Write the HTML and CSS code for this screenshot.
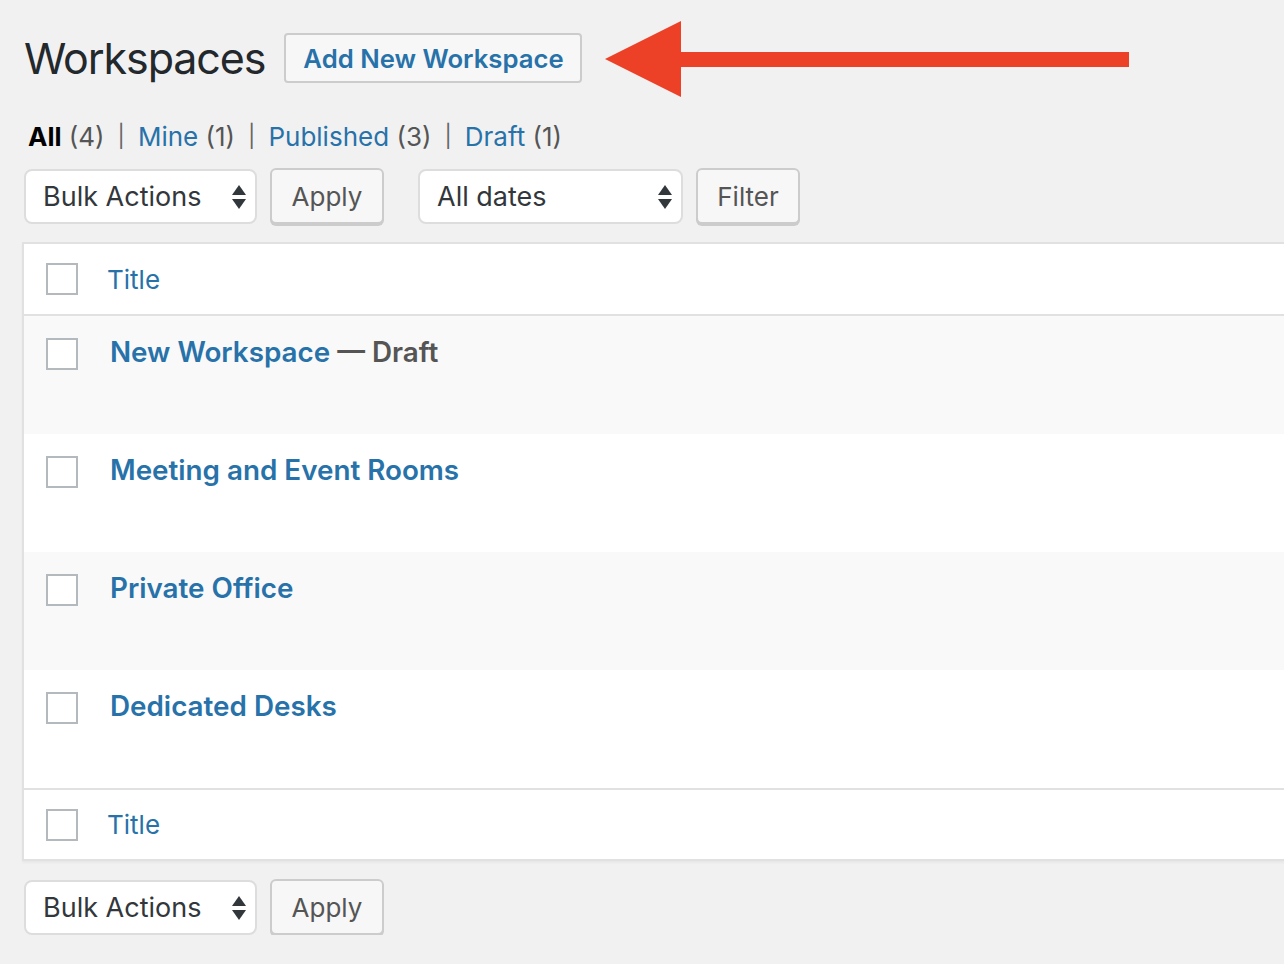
FILE: index.html
```html
<!DOCTYPE html>
<html>
<head>
<meta charset="utf-8">
<link rel="stylesheet" href="styles.css">
</head>
<body>
<div class="wrap">
  <div class="header">
    <h1 class="title">Workspaces</h1>
    <a class="add-btn">Add New Workspace</a>
  </div>
  <svg class="arrow" width="530" height="80" viewBox="0 0 530 80">
    <polygon points="0,38 76,0 76,31 524,31 524,46 76,46 76,76" fill="#ec4027"/>
  </svg>
  <ul class="views">
    <li><span class="current">All</span> <span class="count">(4)</span></li>
    <li class="sep">|</li>
    <li><a>Mine</a> <span class="count">(1)</span></li>
    <li class="sep">|</li>
    <li><a>Published</a> <span class="count">(3)</span></li>
    <li class="sep">|</li>
    <li><a>Draft</a> <span class="count">(1)</span></li>
  </ul>
  <div class="tablenav top">
    <div class="select bulk">Bulk Actions<svg class="updown" width="14" height="24" viewBox="0 0 14 24"><polygon points="7,0 14,10 0,10" fill="#32373c"/><polygon points="0,14 14,14 7,24" fill="#32373c"/></svg></div>
    <div class="button apply">Apply</div>
    <div class="select dates">All dates<svg class="updown" width="14" height="24" viewBox="0 0 14 24"><polygon points="7,0 14,10 0,10" fill="#32373c"/><polygon points="0,14 14,14 7,24" fill="#32373c"/></svg></div>
    <div class="button filter">Filter</div>
  </div>
  <div class="table">
    <div class="row head"><span class="cb"></span><a class="col-title">Title</a></div>
    <div class="row item alt"><span class="cb"></span><div class="item-title"><a>New Workspace</a> <span class="state">— Draft</span></div></div>
    <div class="row item"><span class="cb"></span><div class="item-title"><a>Meeting and Event Rooms</a></div></div>
    <div class="row item alt"><span class="cb"></span><div class="item-title"><a>Private Office</a></div></div>
    <div class="row item"><span class="cb"></span><div class="item-title"><a>Dedicated Desks</a></div></div>
    <div class="row foot"><span class="cb"></span><a class="col-title">Title</a></div>
  </div>
  <div class="tablenav bottom">
    <div class="select bulk">Bulk Actions<svg class="updown" width="14" height="24" viewBox="0 0 14 24"><polygon points="7,0 14,10 0,10" fill="#32373c"/><polygon points="0,14 14,14 7,24" fill="#32373c"/></svg></div>
    <div class="button apply">Apply</div>
  </div>
</div>
</body>
</html>
```

FILE: styles.css
```css
html, body {
  margin: 0;
  padding: 0;
  background: #f1f1f1;
  font-family: Inter, "Liberation Sans", sans-serif;
  color: #23282d;
  overflow: hidden;
}
.wrap {
  position: relative;
  padding-left: 22px;
  width: 1400px;
}
.header {
  display: flex;
  align-items: center;
  padding-top: 33px;
  height: 50px;
}
.title {
  margin: 0 0 0 2px;
  font-size: 43px;
  font-weight: 400;
  color: #23282d;
  letter-spacing: -1.1px;
}
.add-btn {
  margin-left: 19px;
  height: 46px;
  padding: 0 16px 0 17px;
  display: flex;
  align-items: center;
  border: 2px solid #ccc;
  border-radius: 4px;
  background: #f7f7f7;
  color: #2872aa;
  font-size: 25.7px;
  font-weight: 600;
}
.arrow {
  position: absolute;
  left: 605px;
  top: 21px;
}
.views {
  list-style: none;
  margin: 0;
  padding: 0 0 0 6px;
  display: flex;
  height: 36px;
  margin-top: 35px;
  align-items: center;
  font-size: 26px;
}
.views li { white-space: pre; }
.views .sep { color: #666; padding: 0 13px; font-size: 22px; }
.views a { color: #2872aa; }
.views .current { color: #000; font-weight: 700; }
.views .count { color: #555; }
.tablenav {
  display: flex;
  align-items: flex-start;
  padding-left: 2px;
}
.tablenav.top { margin-top: 14px; height: 74px; }
.tablenav.bottom { margin-top: 18px; }
.select {
  box-sizing: border-box;
  height: 55px;
  border: 2px solid #ddd;
  border-radius: 8px;
  background: #fff;
  display: flex;
  align-items: center;
  justify-content: space-between;
  padding: 0 9px 0 17px;
  font-size: 27px;
  color: #32373c;
  margin-top: 1px;
}
.select.bulk { width: 233px; }
.select.dates { width: 265px; margin-left: 34px; }
.button {
  box-sizing: border-box;
  height: 56px;
  border: 2px solid #ccc;
  border-radius: 6px;
  background: #f7f7f7;
  box-shadow: 0 2px 0 #ccc;
  display: flex;
  align-items: center;
  justify-content: center;
  font-size: 26px;
  color: #555;
  margin-left: 13px;
}
.button.apply { width: 114px; }
.button.filter { width: 104px; }
.table {
  border: 2px solid #e1e1e1;
  border-right: none;
  background: #fff;
  box-shadow: 0 2px 2px rgba(0,0,0,0.04);
}
.row {
  display: flex;
  box-sizing: border-box;
  padding-left: 22px;
}
.row.head {
  height: 72px;
  align-items: center;
  border-bottom: 2px solid #e1e1e1;
}
.row.foot {
  height: 71px;
  align-items: center;
  border-top: 2px solid #e1e1e1;
}
.row.item {
  height: 118px;
  align-items: flex-start;
  padding-top: 22px;
}
.row.alt { background: #f9f9f9; }
.cb {
  box-sizing: border-box;
  width: 32px;
  height: 32px;
  border: 2px solid #b4b9be;
  background: #fff;
  flex: none;
}
.col-title {
  margin-left: 29px;
  font-size: 26px;
  color: #2872aa;
}
.item-title {
  margin-left: 32px;
  font-size: 27.8px;
  font-weight: 600;
  line-height: 28px;
}
.item-title a { color: #2872aa; }
.item-title .state { color: #555; }
```
